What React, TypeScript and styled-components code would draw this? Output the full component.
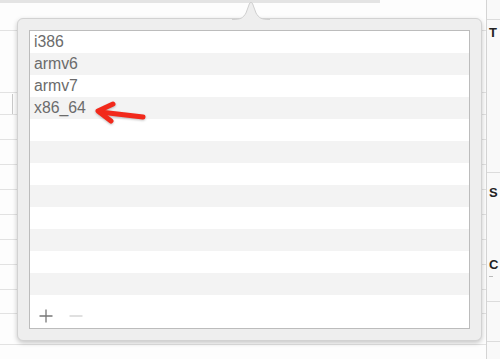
import styled, { createGlobalStyle } from "styled-components";

const GlobalStyle = createGlobalStyle`
  html, body {
    margin: 0;
    padding: 0;
    background: #ffffff;
  }
  body {
    font-family: "Liberation Sans", Arial, Helvetica, sans-serif;
  }
`;

const archs = ["i386", "armv6", "armv7", "x86_64"];
const rowCount = 12;
const bgLines = [31, 93, 115, 140, 165, 190, 215, 240, 265, 290, 314, 345];

const Page = styled.div`
  position: relative;
  display: flex;
  width: 500px;
  height: 359px;
  overflow: hidden;
  background: #fdfdfd;
`;

const Canvas = styled.div`
  position: relative;
  width: 486px;
  display: flex;
  flex-direction: column;
`;

const TopStrip = styled.div`
  width: 380px;
  height: 3px;
  background: #e4e4e4;
`;

const BgRow = styled.div<{ $h: number }>`
  height: ${(p) => p.$h}px;
  border-bottom: 1px solid #e2e2e2;
  box-sizing: border-box;
  display: flex;
  align-items: center;
`;

const ScrollMark = styled.div`
  width: 1px;
  height: 20px;
  margin-left: 12px;
  background: #c9c9c9;
`;

const Inspector = styled.div`
  flex: 1;
  border-left: 1px solid #d4d4d4;
  background: #f9f9f9;
  display: flex;
  flex-direction: column;
  overflow: hidden;
`;

const InspSection = styled.div<{ $h: number }>`
  height: ${(p) => p.$h}px;
  border-bottom: 1px solid #dcdcdc;
  box-sizing: border-box;
  padding-left: 2px;
  display: flex;
  flex-direction: column;
`;

const InspLabel = styled.span<{ $top: number }>`
  margin-top: ${(p) => p.$top}px;
  font-size: 13px;
  font-weight: 700;
  color: #222;
  line-height: 14px;
  white-space: nowrap;
`;

const InspDash = styled.span`
  margin-top: 4px;
  width: 4px;
  height: 1px;
  background: #bbb;
`;

const Popover = styled.div`
  position: absolute;
  left: 17px;
  top: 18px;
  width: 465px;
  height: 323px;
  box-sizing: border-box;
  background: #eeeeee;
  border: 1px solid #d2d2d2;
  border-radius: 6px;
  box-shadow: 0 2px 5px rgba(0, 0, 0, 0.22);
  padding: 11px;
  display: flex;
`;

const Beak = styled.svg`
  position: absolute;
  left: 214px;
  top: -18px;
`;

const List = styled.div`
  flex: 1;
  border: 1px solid #bcbcbc;
  background: #ffffff;
  display: flex;
  flex-direction: column;
`;

const Row = styled.div<{ $odd: boolean }>`
  height: 22px;
  line-height: 22px;
  padding-left: 4px;
  font-size: 15.8px;
  color: #6b6b6b;
  background: ${(p) => (p.$odd ? "#f3f3f3" : "#ffffff")};
`;

const Footer = styled.div`
  flex: 1;
  display: flex;
  align-items: flex-end;
  gap: 14px;
  padding: 0 0 4px 8px;
`;

const ToolBtn = styled.svg<{ $disabled?: boolean }>`
  color: ${(p) => (p.$disabled ? "#d0d0d0" : "#777777")};
`;

const RedArrow = styled.svg`
  position: absolute;
  left: 90px;
  top: 98px;
  filter: drop-shadow(0 1px 1px rgba(0, 0, 0, 0.25));
`;

export default function App() {
  return (
    <>
      <GlobalStyle />
      <Page>
        <Canvas>
          <TopStrip />
          {bgLines.map((y, i) => {
            const prev = i === 0 ? 3 : bgLines[i - 1];
            return (
              <BgRow key={y} $h={y - prev}>
                {i === 2 && <ScrollMark />}
              </BgRow>
            );
          })}
        </Canvas>
        <Inspector>
          <InspSection $h={20} />
          <InspSection $h={153}>
            <InspLabel $top={6}>T</InspLabel>
          </InspSection>
          <InspSection $h={129}>
            <InspLabel $top={13}>S</InspLabel>
            <InspLabel $top={58}>C</InspLabel>
            <InspDash />
          </InspSection>
          <InspSection $h={40} />
        </Inspector>

        <Popover>
          <Beak width="38" height="19" viewBox="0 0 38 19">
            <path
              d="M0 18.5 C9 18.5 11 17 14 12 L17.3 3 Q19 -0.5 20.7 3 L24 12 C27 17 29 18.5 38 18.5 L38 19 L0 19 Z"
              fill="#eeeeee"
            />
            <path
              d="M0 18.5 C9 18.5 11 17 14 12 L17.3 3 Q19 -0.5 20.7 3 L24 12 C27 17 29 18.5 38 18.5"
              fill="none"
              stroke="#cfcfcf"
              strokeWidth="1"
            />
          </Beak>
          <List>
            {Array.from({ length: rowCount }).map((_, i) => (
              <Row key={i} $odd={i % 2 === 1}>
                {archs[i] ?? ""}
              </Row>
            ))}
            <Footer>
              <ToolBtn width="16" height="16" viewBox="0 0 16 16">
                <path d="M8 1.5 V14.5 M1.5 8 H14.5" stroke="currentColor" strokeWidth="1.3" />
              </ToolBtn>
              <ToolBtn $disabled width="16" height="16" viewBox="0 0 16 16">
                <path d="M1.5 8 H14.5" stroke="currentColor" strokeWidth="1.3" />
              </ToolBtn>
            </Footer>
          </List>
        </Popover>

        <RedArrow width="62" height="30" viewBox="0 0 62 30">
          <g fill="none" stroke="#f2291b" strokeWidth="5" strokeLinecap="round" strokeLinejoin="round">
            <path d="M53 19 L10 14" />
            <path d="M23 6 L8 13 L21 23" />
          </g>
        </RedArrow>
      </Page>
    </>
  );
}
